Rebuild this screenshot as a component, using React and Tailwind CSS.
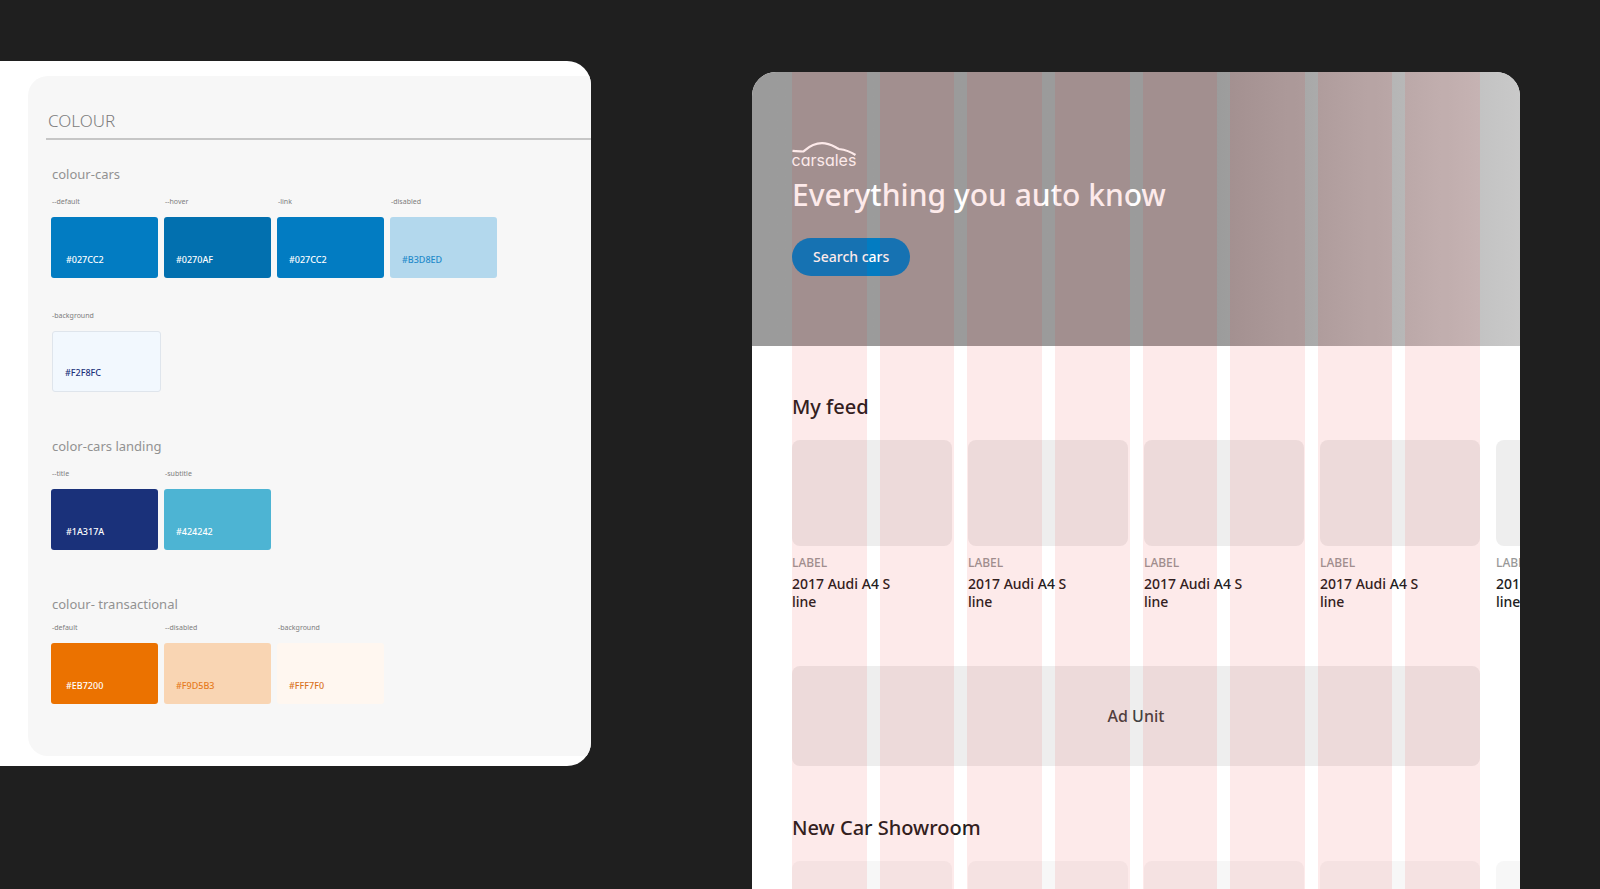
import clsx from "clsx";

const COLOUR_GROUPS = [
  {
    title: "colour-cars",
    labelGap: "mt-3",
    rows: [
      [
        { label: "--default", hex: "#027CC2", box: "bg-[#027cc2] text-white" },
        { label: "--hover", hex: "#0270AF", box: "bg-[#0270af] text-white" },
        { label: "-link", hex: "#027CC2", box: "bg-[#027cc2] text-white" },
        {
          label: "-disabled",
          hex: "#B3D8ED",
          box: "bg-[#b3d8ed] text-[#1f8aca]",
        },
      ],
      [
        {
          label: "-background",
          hex: "#F2F8FC",
          box: "bg-[#f2f8fe] text-[#1a317a]",
          outlined: true,
        },
      ],
    ],
  },
  {
    title: "color-cars landing",
    labelGap: "mt-3",
    rows: [
      [
        { label: "--title", hex: "#1A317A", box: "bg-[#1a317a] text-white" },
        { label: "-subtitle", hex: "#424242", box: "bg-[#4db4d3] text-white" },
      ],
    ],
  },
  {
    title: "colour- transactional",
    labelGap: "mt-2",
    rows: [
      [
        { label: "-default", hex: "#EB7200", box: "bg-[#eb7200] text-white" },
        {
          label: "--disabled",
          hex: "#F9D5B3",
          box: "bg-[#f9d5b3] text-[#e67a1c]",
        },
        {
          label: "-background",
          hex: "#FFF7F0",
          box: "bg-[#fff7f0] text-[#d9721c]",
        },
      ],
    ],
  },
];

const FEED = [1, 2, 3, 4, 5].map((id) => ({
  id,
  label: "LABEL",
  title: ["2017 Audi A4 S", "line"],
}));

const GRID_COLUMNS = 8;

const Swatch = ({ label, hex, box, outlined, first }) => (
  <li>
    <p className="pl-px text-[7px] leading-3 text-[#7d7d7d]">{label}</p>
    <div
      className={clsx(
        "mt-[9px] flex h-[61px] items-end rounded-[3px] pb-3 text-[9px] leading-3 font-medium",
        outlined ? "ml-px w-[109px] border border-[#dfe5ec]" : "w-[107px]",
        first && !outlined ? "pl-[15px]" : "pl-3",
        box
      )}
    >
      {hex}
    </div>
  </li>
);

const ColourPanel = () => (
  <section className="mt-[61px] mr-[161px] min-w-0 flex-1 self-start overflow-hidden rounded-r-3xl bg-white pt-[15px] pb-[10px]">
    <div className="ml-7 rounded-l-[20px] bg-[#f7f7f7] pt-[33px] pb-[52px]">
      <h2 className="ml-[18px] border-b-2 border-[#c6c6c6] pb-[5px] pl-0.5 text-[17px] leading-6 font-light text-[#7d7d7d]">
        COLOUR
      </h2>
      <div className="flex flex-col gap-11 pt-6 pl-[23px]">
        {COLOUR_GROUPS.map((group) => (
          <div key={group.title}>
            <h3 className="pl-px text-[13px] leading-5 text-[#929292]">
              {group.title}
            </h3>
            <div className={clsx("flex flex-col gap-8", group.labelGap)}>
              {group.rows.map((row, idx) => (
                <ul key={idx} className="flex gap-1.5">
                  {row.map((swatch, i) => (
                    <Swatch key={swatch.label} {...swatch} first={i === 0} />
                  ))}
                </ul>
              ))}
            </div>
          </div>
        ))}
      </div>
    </div>
  </section>
);

const CarsalesLogo = () => (
  <svg
    viewBox="0 0 64 24"
    className="h-6 w-16 overflow-visible"
    role="img"
    aria-label="carsales"
  >
    <path
      d="M0.5 8.800 C4 9.200 8 9.300 11.500 9.500 C15 6.500 20 1.200 30 1.200 C38 1.200 41.500 4.500 47 7 C53 7.800 58 9.300 63.500 13"
      fill="none"
      stroke="#fff"
      strokeWidth="2.200"
    />
    <text
      x="-0.500"
      y="23.500"
      fill="#fff"
      className="font-['Inter',sans-serif] text-[16px] [font-feature-settings:'cv11']"
    >
      carsales
    </text>
  </svg>
);

const Hero = () => (
  <header className="bg-linear-to-r from-[#9b9b9b] from-60% to-[#c9c9c9] px-10 py-[70px]">
    <CarsalesLogo />
    <h1 className="mt-[9px] text-[30px] leading-10 font-medium text-white">
      Everything you auto know
    </h1>
    <button
      type="button"
      className="mt-[23px] block h-[38px] rounded-full bg-[#027cc2] px-[21px] pb-0.5 text-[14px] font-medium text-white"
    >
      Search cars
    </button>
  </header>
);

const FeedCard = ({ label, title }) => (
  <article className="w-40 shrink-0">
    <div className="h-[106px] rounded-lg bg-[#eeeeee]" />
    <p className="mt-[9px] text-[12px] leading-4 font-medium text-[#999999]">
      {label}
    </p>
    <h3 className="mt-1 text-[14px] leading-[18px] font-medium text-[#212121]">
      {title[0]}
      <br />
      {title[1]}
    </h3>
  </article>
);

const GridOverlay = () => (
  <div className="pointer-events-none absolute inset-0 grid grid-cols-8 gap-[13px] px-10">
    {Array.from({ length: GRID_COLUMNS }, (_, i) => (
      <div key={i} className="bg-[#e81515]/9" />
    ))}
  </div>
);

const LandingPage = () => (
  <section className="relative mt-[72px] mr-20 w-3xl shrink-0 overflow-hidden rounded-t-3xl bg-white">
    <Hero />
    <div className="pt-[47px] pl-10">
      <h2 className="text-[20px] leading-7 font-medium text-[#212121]">
        My feed
      </h2>
      <div className="mt-[19px] flex gap-4 overflow-hidden">
        {FEED.map((item) => (
          <FeedCard key={item.id} {...item} />
        ))}
      </div>
      <div className="mt-[55px] mr-10 flex h-[100px] items-center justify-center rounded-lg bg-[#eeeeee] text-[16px] font-medium text-[#424242]">
        Ad Unit
      </div>
      <h2 className="mt-12 text-[20px] leading-7 font-medium text-[#212121]">
        New Car Showroom
      </h2>
      <div className="mt-[19px] flex gap-4 overflow-hidden">
        {FEED.map((item) => (
          <div
            key={item.id}
            className="h-[106px] w-40 shrink-0 rounded-lg bg-[#f7f7f7]"
          />
        ))}
      </div>
    </div>
    <GridOverlay />
  </section>
);

export default function App() {
  return (
    <main className="flex h-screen overflow-hidden bg-[#1f1f1f] font-['Noto_Sans',sans-serif]">
      <ColourPanel />
      <LandingPage />
    </main>
  );
}
